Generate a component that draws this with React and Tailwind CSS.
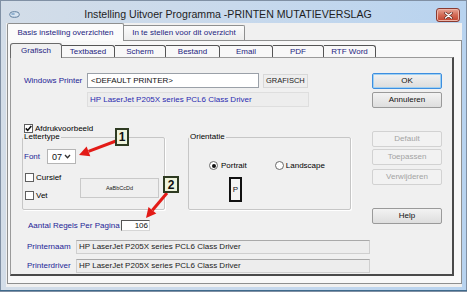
import React from "react";

const innerTabs = [
  { label: "Grafisch", w: "w-[52px]", sel: true },
  { label: "Textbased", w: "w-[53px]" },
  { label: "Scherm", w: "w-[51px]" },
  { label: "Bestand", w: "w-[54px]" },
  { label: "Email", w: "w-[53px]" },
  { label: "PDF", w: "w-[51px]" },
  { label: "RTF Word", w: "w-[52px]" },
];

function Check({ checked }) {
  return (
    <span className="w-[9px] h-[9px] border border-[#5f5f5f] bg-white flex items-center justify-center shrink-0">
      {checked && (
        <svg width="7" height="7" viewBox="0 0 7 7">
          <polyline points="0.8,3.4 2.7,5.4 6.3,1" fill="none" stroke="#111" strokeWidth="1.6" />
        </svg>
      )}
    </span>
  );
}

function Radio({ checked }) {
  return (
    <span className="w-[9px] h-[9px] rounded-full border border-[#6a6a6a] bg-white flex items-center justify-center shrink-0">
      {checked && <span className="w-[4px] h-[4px] rounded-full bg-[#111]" />}
    </span>
  );
}

function Btn({ children, variant }) {
  if (variant === "focus")
    return (
      <div className="h-[16px] flex items-center justify-center rounded-[2px] border border-[#3d8ee0] bg-gradient-to-b from-[#f2f2f2] to-[#dcdcdc] shadow-[inset_0_0_0_1px_#9fd0f2] text-[#111]">
        {children}
      </div>
    );
  if (variant === "disabled")
    return (
      <div className="h-[16px] flex items-center justify-center rounded-[2px] border border-[#d2d2d2] bg-[#f2f2f2] text-[#a3a3a3]">
        {children}
      </div>
    );
  return (
    <div className="h-[16px] flex items-center justify-center rounded-[2px] border border-[#9a9a9a] bg-gradient-to-b from-[#f3f3f3] to-[#dedede] text-[#111]">
      {children}
    </div>
  );
}

export default function App() {
  return (
    <div className="relative w-[467px] h-[292px] overflow-hidden font-['Liberation_Sans',Arial,sans-serif] text-[8px] leading-[10px] text-black bg-gradient-to-r from-[#d3dde8] via-[#c8d9ec] to-[#b8d3ef] shadow-[inset_0_0_0_1px_#8090a4] flex flex-col">
      {/* Title bar */}
      <div className="h-[23px] flex shrink-0">
        <div className="ml-[9px] pt-[11px]">
          <svg width="11" height="7" viewBox="0 0 11 7">
            <ellipse cx="5.5" cy="3.5" rx="4.8" ry="2.8" fill="#d8e4f0" stroke="#5d7c9c" strokeWidth="1" />
            <ellipse cx="4" cy="3" rx="2" ry="1" fill="#8fb0d0" />
          </svg>
        </div>
        <div className="flex-1 text-center pt-[8px] text-[10.6px] leading-[12px] text-[#1e1e1e]">
          Instelling Uitvoer Programma -PRINTEN MUTATIEVERSLAG
        </div>
        <div className="self-end mb-[1px] mr-[7px] w-[24px] h-[14px] rounded-[3px] border border-[#8a3b31] bg-gradient-to-b from-[#e7a596] via-[#d26a55] to-[#c2412c] flex items-center justify-center shadow-[inset_0_0_0_1px_#eeb5a8]">
          <svg width="9" height="7" viewBox="0 0 9 7">
            <path d="M1.5 1 L7.5 6 M7.5 1 L1.5 6" stroke="#5a2820" strokeWidth="2.6" strokeLinecap="round" />
            <path d="M1.5 1 L7.5 6 M7.5 1 L1.5 6" stroke="#ffffff" strokeWidth="1.4" strokeLinecap="round" />
          </svg>
        </div>
      </div>

      {/* Client */}
      <div className="ml-[6px] w-[456px] h-[264px] bg-[#f0f0f0] shrink-0 flex flex-col">
        {/* Outer tabs */}
        <div className="h-[17px] flex items-end pl-[1px] shrink-0">
          <div className="relative z-10 w-[117px] h-[18px] -mb-[1px] border border-b-0 border-[#8e8f8f] rounded-t-[2px] bg-[#fbfbfb] flex items-center justify-center text-[#1e1e80]">
            Basis instelling overzichten
          </div>
          <div className="w-[121px] h-[15px] border border-b-0 border-l-0 border-[#8e8f8f] rounded-tr-[2px] bg-gradient-to-b from-[#fbfbfb] to-[#ececec] flex items-center justify-center text-[#1e1e80]">
            In te stellen voor dit overzicht
          </div>
        </div>

        {/* Outer panel */}
        <div className="ml-[1px] w-[455px] h-[244px] border border-[#8e8f8f] bg-[#f8f8f8] flex flex-col">
          {/* Inner tabs */}
          <div className="h-[16px] pt-[2px] pl-[2px] flex items-end shrink-0">
            {innerTabs.map((t) =>
              t.sel ? (
                <div
                  key={t.label}
                  className={`${t.w} relative z-10 h-[15px] -mb-[1px] border border-b-0 border-[#6a6a6a] rounded-t-[3px] bg-[#f0f0f0] flex items-center justify-center text-[#1e1e80]`}
                >
                  {t.label}
                </div>
              ) : (
                <div
                  key={t.label}
                  className={`${t.w} h-[12px] border border-b-0 border-l-0 border-[#555] rounded-tr-[3px] bg-[#f8f8f8] flex items-center justify-center text-[#1e1e80]`}
                >
                  {t.label}
                </div>
              )
            )}
          </div>

          {/* Inner panel */}
          <div className="ml-[2px] w-[444px] h-[219px] border-l border-t border-[#9a9a9a] border-r-2 border-b-2 border-r-[#4a4a4a] border-b-[#4a4a4a] bg-[#f0f0f0] flex">
            {/* Left column */}
            <div className="w-[361px] flex flex-col">
              <div className="mt-[15px] h-[15px] flex items-center">
                <div className="w-[76px] pl-[13px] text-[#1d1d96]">Windows Printer</div>
                <div className="w-[172px] h-[15px] border border-[#9aa0a8] bg-white flex items-center pl-[3px] text-[8px] text-[#111]">
                  &lt;DEFAULT PRINTER&gt;
                </div>
                <div className="ml-[4px] w-[45px] h-[14px] border border-[#d8d8d8] bg-[#eeeeee] flex items-center pl-[2px] text-[7.5px] text-[#222]">
                  GRAFISCH
                </div>
              </div>
              <div className="mt-[4px] ml-[76px] w-[222px] h-[15px] border border-[#dedede] bg-[#ededed] flex items-center pl-[2px] text-[#2a2ab0]">
                HP LaserJet P205X series PCL6 Class Driver
              </div>
              <div className="mt-[16px] h-[11px] pl-[13px] flex items-center gap-[2px]">
                <Check checked />
                <span>Afdrukvoorbeeld</span>
              </div>

              {/* Group boxes */}
              <div className="-mt-[1px] flex items-start">
                <fieldset className="ml-[11px] w-[143px] h-[77px] border border-[#c6c6c6] rounded-[2px] shadow-[1px_1px_0_#ffffff]">
                  <legend className="leading-[8px] pl-[1px] pr-[1px]">Lettertype</legend>
                  <div className="mt-[8px] flex items-center">
                    <span className="pl-[1px] w-[24px] text-[#1d1d96]">Font</span>
                    <div className="w-[29px] h-[15px] border border-[#b5b5b5] bg-white flex items-center pl-[4px] text-[9px] text-[#111]">
                      <span className="flex-1">07</span>
                      <svg width="7" height="5" viewBox="0 0 7 5" className="mr-[4px]">
                        <polyline points="1,1 3.5,3.8 6,1" fill="none" stroke="#333" strokeWidth="1.3" />
                      </svg>
                    </div>
                  </div>
                  <div className="mt-[8px] flex items-start">
                    <div className="w-[57px] pl-[2px] flex flex-col">
                      <div className="h-[11px] flex items-center gap-[2px]">
                        <Check />
                        <span>Cursief</span>
                      </div>
                      <div className="mt-[7px] h-[11px] flex items-center gap-[2px]">
                        <Check />
                        <span>Vet</span>
                      </div>
                    </div>
                    <div className="mt-[6px] w-[79px] h-[20px] border border-[#c9c9c9] bg-[#efefef] flex items-center justify-center text-[5.5px] text-[#222]">
                      AaBbCcDd
                    </div>
                  </div>
                </fieldset>

                <fieldset className="ml-[23px] w-[163px] h-[77px] border border-[#c6c6c6] rounded-[2px] shadow-[1px_1px_0_#ffffff]">
                  <legend className="leading-[8px] pl-[1px] pr-[1px]">Orientatie</legend>
                  <div className="mt-[19px] h-[11px] flex items-center">
                    <div className="ml-[20px] flex items-center gap-[3px]">
                      <Radio checked />
                      <span>Portrait</span>
                    </div>
                    <div className="ml-[28px] flex items-center gap-[2px]">
                      <Radio />
                      <span>Landscape</span>
                    </div>
                  </div>
                  <div className="mt-[6px] ml-[40px] w-[13px] h-[25px] border-2 border-[#111] bg-[#f4f4f4] flex items-center justify-center text-[8px] text-[#111]">
                    P
                  </div>
                </fieldset>
              </div>

              <div className="mt-[10px] h-[11px] flex items-center">
                <div className="w-[110px] pl-[17px] text-[#1d1d96]">Aantal Regels Per Pagina</div>
                <div className="w-[29px] h-[11px] border border-[#555] border-r-[#d6d6d6] border-b-[#d6d6d6] bg-white flex items-center justify-end pr-[1px] text-[#111]">
                  106
                </div>
              </div>

              <div className="mt-[9px] h-[14px] flex items-center">
                <div className="w-[65px] pl-[16px] text-[#1d1d96]">Printernaam</div>
                <div className="w-[294px] h-[14px] border border-[#cfcfcf] border-t-[#a9a9a9] bg-[#ededed] flex items-center pl-[2px] text-[#222]">
                  HP LaserJet P205X series PCL6 Class Driver
                </div>
              </div>
              <div className="mt-[5px] h-[14px] flex items-center">
                <div className="w-[65px] pl-[16px] text-[#1d1d96]">Printerdriver</div>
                <div className="w-[294px] h-[14px] border border-[#cfcfcf] border-t-[#a9a9a9] bg-[#ededed] flex items-center pl-[2px] text-[#222]">
                  HP LaserJet P205X series PCL6 Class Driver
                </div>
              </div>
            </div>

            {/* Right column buttons */}
            <div className="w-[70px] flex flex-col">
              <div className="mt-[15px]">
                <Btn variant="focus">OK</Btn>
              </div>
              <div className="mt-[3px]">
                <Btn>Annuleren</Btn>
              </div>
              <div className="mt-[23px]">
                <Btn variant="disabled">Default</Btn>
              </div>
              <div className="mt-[2px]">
                <Btn variant="disabled">Toepassen</Btn>
              </div>
              <div className="mt-[4px]">
                <Btn variant="disabled">Verwijderen</Btn>
              </div>
              <div className="mt-[23px]">
                <Btn>Help</Btn>
              </div>
            </div>
          </div>
        </div>
      </div>

      {/* Bottom frame */}
      <div className="mt-[2px] h-[2px] border-b border-[#3f6a8c] shrink-0" />

      {/* Annotations */}
      <svg className="absolute left-0 top-0 pointer-events-none" width="467" height="292" viewBox="0 0 467 292">
        <line x1="116" y1="141" x2="88.5" y2="151.4" stroke="#e31b17" strokeWidth="3" />
        <polygon points="79,155 90.3,156.3 86.6,146.6" fill="#e31b17" />
        <line x1="167" y1="193" x2="152.4" y2="210.3" stroke="#e31b17" strokeWidth="3" />
        <polygon points="146,218 156.3,213.6 148.5,207" fill="#e31b17" />
      </svg>
      <div className="absolute left-[115px] top-[128px] w-[14px] h-[18px] border-2 border-[#2e3b22] bg-[#eef3dc] flex items-center justify-center text-[12px] leading-[12px] font-bold text-[#111]">
        1
      </div>
      <div className="absolute left-[163px] top-[176px] w-[16px] h-[17px] border-2 border-[#2e3b22] bg-[#eef3dc] flex items-center justify-center text-[12px] leading-[12px] font-bold text-[#111]">
        2
      </div>
    </div>
  );
}
